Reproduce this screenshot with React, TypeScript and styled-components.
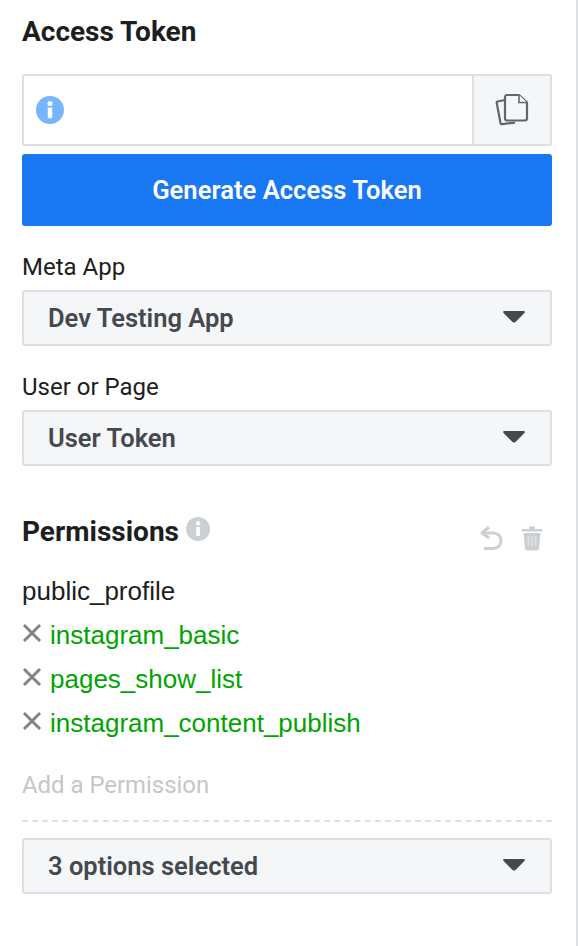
import React from "react";
import styled, { createGlobalStyle } from "styled-components";

const Global = createGlobalStyle`
  html, body { margin: 0; padding: 0; background: #fff; }
  * { box-sizing: border-box; }
`;

const Panel = styled.div`
  width: 578px;
  height: 946px;
  padding: 0 24px 0 22px;
  border-right: 2px solid #dddfe2;
  font-family: Roboto, "Liberation Sans", sans-serif;
  color: #1c1e21;
  overflow: hidden;
`;

const Title = styled.h2`
  margin: 0;
  font-size: 28px;
  line-height: 32px;
  font-weight: 700;
  color: #1c1e21;
`;

const TokenTitle = styled(Title)`
  padding-top: 16px;
  height: 74px;
`;

const TokenBox = styled.div`
  display: flex;
  height: 72px;
  border: 2px solid #dddfe2;
  border-radius: 2px;
`;

const TokenField = styled.div`
  flex: 1;
  display: flex;
  align-items: center;
  padding-left: 12px;
  background: #fff;
`;

const CopyButton = styled.div`
  width: 78px;
  display: flex;
  align-items: center;
  justify-content: center;
  background: #f5f6f7;
  border-left: 2px solid #dddfe2;
`;

const PrimaryButton = styled.button`
  display: block;
  width: 100%;
  height: 72px;
  margin-top: 8px;
  border: 0;
  border-radius: 3px;
  background: #1877f2;
  color: #fff;
  font-family: Roboto, "Liberation Sans", sans-serif;
  font-size: 25.6px;
  font-weight: 600;
`;

const FieldLabel = styled.div<{ $top: number }>`
  margin-top: ${(p) => p.$top}px;
  padding-top: 2px;
  font-size: 24px;
  line-height: 30px;
  color: #1c1e21;
  height: 34px;
`;

const Select = styled.div<{ $top?: number }>`
  display: flex;
  align-items: center;
  justify-content: space-between;
  height: 56px;
  margin-top: ${(p) => p.$top ?? 0}px;
  padding: 0 25px 0 24px;
  background: #f5f6f7;
  border: 2px solid #dddfe2;
  border-radius: 3px;
  font-size: 25.5px;
  font-weight: 600;
  color: #444950;
`;

const Caret = styled.svg`
  width: 22px;
  height: 12px;
  margin-top: -2px;
`;

const PermHeader = styled.div`
  display: flex;
  align-items: flex-start;
  margin-top: 47px;
  height: 56px;
`;

const PermTitle = styled(Title)`
  line-height: 38px;
`;

const HeaderInfo = styled.span`
  margin: 4px 0 0 7px;
  display: flex;
`;

const HeaderActions = styled.div`
  margin-left: auto;
  display: flex;
  align-items: center;
  gap: 18px;
  padding: 12px 9px 0 0;
`;

const PermList = styled.div`
  display: flex;
  flex-direction: column;
  font-family: "Liberation Sans", Arial, sans-serif;
  font-size: 26px;
`;

const PermRow = styled.div<{ $granted?: boolean }>`
  display: flex;
  align-items: center;
  height: 44px;
  gap: 8px;
  color: ${(p) => (p.$granted ? "#00a400" : "#1c1e21")};
`;

const Remove = styled.span`
  display: flex;
  width: 20px;
  margin-top: -4px;
`;

const AddInput = styled.div`
  margin-top: 21px;
  height: 38px;
  line-height: 38px;
  font-size: 23.9px;
  color: #c4c6ca;
  border: 0;
`;

const Dashed = styled.div`
  margin-top: 16px;
  border-top: 2px dashed #dddfe2;
  margin-bottom: 16px;
`;

const InfoIcon = ({ fill, size }: { fill: string; size: number }) => (
  <svg width={size} height={size} viewBox="0 0 28 28">
    <circle cx="14" cy="14" r="14" fill={fill} />
    <circle cx="14" cy="7.6" r="2.5" fill="#fff" />
    <rect x="11.8" y="11.6" width="4.4" height="10.6" rx="0.8" fill="#fff" />
  </svg>
);

const CopyIcon = () => (
  <svg width="34" height="34" viewBox="0 0 34 34" fill="none" stroke="#606770" strokeWidth="2.2">
    <path d="M10 7 L2.5 8.5 C2 8.7 1.6 9 1.7 9.8 L5.5 30 C5.7 31 6.2 31.4 7 31.2 L20 29.6" />
    <path d="M10 4.5 C10 3 10.8 2 12 2 H24 L32 9.5 V25 C32 26.5 31.2 27.5 30 27.5 H12 C10.8 27.5 10 26.5 10 25 Z" fill="#f5f6f7" />
    <path d="M24 2 V9.5 H32" fill="#fff" strokeWidth="1.6" />
  </svg>
);

const UndoIcon = () => (
  <svg width="24" height="26" viewBox="0 0 24 26" fill="none" stroke="#ccd0d5" strokeWidth="3">
    <path d="M10 2 L3 8 L10 13" strokeLinejoin="round" />
    <path d="M3 8 H14 C19 8 22 11.5 22 15.5 C22 20 19 23.5 14 23.5 H5" />
  </svg>
);

const TrashIcon = () => (
  <svg width="22" height="25" viewBox="0 0 22 25">
    <rect x="8" y="0.5" width="6" height="2.5" rx="1" fill="#ccd0d5" />
    <rect x="0.5" y="3" width="21" height="2.6" rx="1" fill="#ccd0d5" />
    <path d="M2.5 7 H19.5 L18 22.5 C17.9 23.8 17 24.5 16 24.5 H6 C5 24.5 4.1 23.8 4 22.5 Z" fill="#ccd0d5" />
    <path d="M7.5 10 V20 M11 10 V20 M14.5 10 V20" stroke="#dfe2e6" strokeWidth="1.6" />
  </svg>
);

const CloseIcon = () => (
  <svg width="20" height="20" viewBox="0 0 20 20" stroke="#808388" strokeWidth="3">
    <path d="M2 2 L18 18 M18 2 L2 18" />
  </svg>
);

const CaretIcon = () => (
  <Caret viewBox="0 0 22 12">
    <path d="M1.5 0 H20.5 C21.8 0 22.3 1.2 21.4 2.1 L13 10.6 C11.8 11.8 10.2 11.8 9 10.6 L0.6 2.1 C-0.3 1.2 0.2 0 1.5 0 Z" fill="#444950" />
  </Caret>
);

const granted = ["instagram_basic", "pages_show_list", "instagram_content_publish"];

export default function App() {
  return (
    <>
      <Global />
      <Panel>
        <TokenTitle>Access Token</TokenTitle>
        <TokenBox>
          <TokenField>
            <InfoIcon fill="#77b6ff" size={28} />
          </TokenField>
          <CopyButton>
            <CopyIcon />
          </CopyButton>
        </TokenBox>
        <PrimaryButton>Generate Access Token</PrimaryButton>
        <FieldLabel $top={24}>Meta App</FieldLabel>
        <Select $top={6}>
          Dev Testing App
          <CaretIcon />
        </Select>
        <FieldLabel $top={24}>User or Page</FieldLabel>
        <Select $top={6}>
          User Token
          <CaretIcon />
        </Select>
        <PermHeader>
          <PermTitle>Permissions</PermTitle>
          <HeaderInfo>
            <InfoIcon fill="#ccd0d5" size={24} />
          </HeaderInfo>
          <HeaderActions>
            <UndoIcon />
            <TrashIcon />
          </HeaderActions>
        </PermHeader>
        <PermList>
          <PermRow>public_profile</PermRow>
          {granted.map((name) => (
            <PermRow key={name} $granted>
              <Remove>
                <CloseIcon />
              </Remove>
              {name}
            </PermRow>
          ))}
        </PermList>
        <AddInput>Add a Permission</AddInput>
        <Dashed />
        <Select>
          3 options selected
          <CaretIcon />
        </Select>
      </Panel>
    </>
  );
}
